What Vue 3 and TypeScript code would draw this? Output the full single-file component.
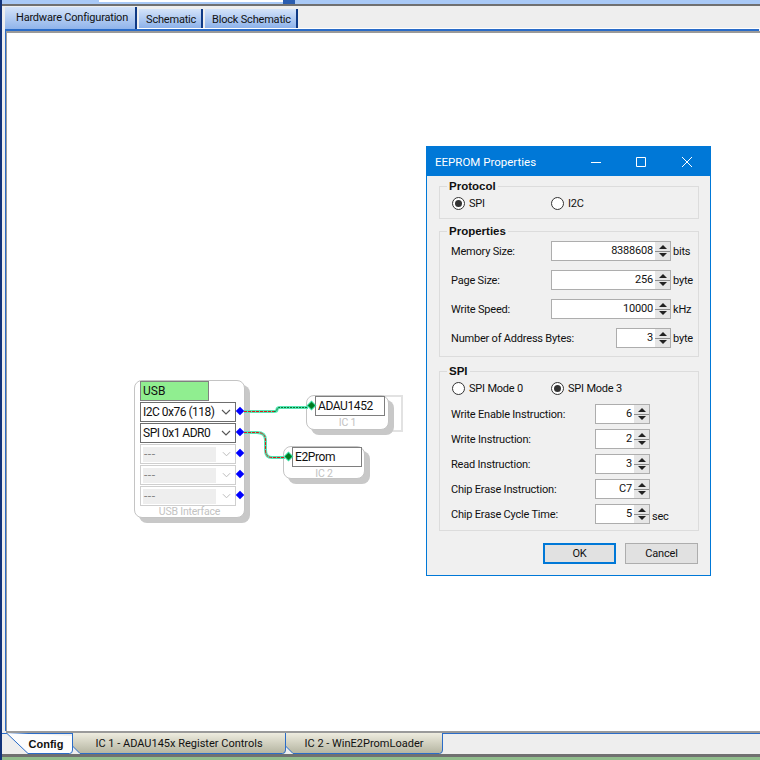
<script setup lang="ts">
interface BottomTab {
  label: string
  width: number
  active?: boolean
}

const topTabs = ['Hardware Configuration', 'Schematic', 'Block Schematic']

const bottomTabs: BottomTab[] = [
  { label: 'Config', width: 67, active: true },
  { label: 'IC 1 - ADAU145x Register Controls', width: 214 },
  { label: 'IC 2 - WinE2PromLoader', width: 158 }
]

const usbPorts = [
  { label: 'I2C 0x76 (118)', on: true },
  { label: 'SPI 0x1 ADR0', on: true },
  { label: '---', on: false },
  { label: '---', on: false },
  { label: '---', on: false }
]

const propertyRows = [
  { label: 'Memory Size:', value: '8388608', unit: 'bits', narrow: false },
  { label: 'Page Size:', value: '256', unit: 'byte', narrow: false },
  { label: 'Write Speed:', value: '10000', unit: 'kHz', narrow: false },
  { label: 'Number of Address Bytes:', value: '3', unit: 'byte', narrow: true }
]

const spiRows = [
  { label: 'Write Enable Instruction:', value: '6', unit: '' },
  { label: 'Write Instruction:', value: '2', unit: '' },
  { label: 'Read Instruction:', value: '3', unit: '' },
  { label: 'Chip Erase Instruction:', value: 'C7', unit: '' },
  { label: 'Chip Erase Cycle Time:', value: '5', unit: 'sec' }
]

// outline of a bottom tab, the slant on the left is bigger for the active one
const tabPath = (t: BottomTab) => {
  const w = t.width - 0.5
  if (t.active) return `M0.5 0 L22 20.5 H${w - 3} Q${w} 20.5 ${w} 17 V3`
  return `M0.5 0 V13 L8 20.5 H${w - 3} Q${w} 20.5 ${w} 17 V0`
}
</script>

<template>
  <div class="app">
    <div class="top-bar">
      <div class="top-input"></div>
      <div class="top-knob"></div>
    </div>

    <div class="tab-strip">
      <div
        v-for="(tab, i) in topTabs"
        :key="tab"
        class="top-tab"
        :class="{ 'is-active': i === 0 }"
      >{{ tab }}</div>
    </div>

    <div class="canvas">
      <div class="node node-usb">
        <div class="usb-title">USB</div>
        <div
          v-for="(port, i) in usbPorts"
          :key="i"
          class="usb-row"
          :class="{ 'is-off': !port.on }"
        >
          <span class="usb-label">{{ port.label }}</span>
          <svg class="chevron" width="10" height="6" viewBox="0 0 10 6">
            <path d="M1 1 L5 5 L9 1" fill="none" stroke-width="1.1" />
          </svg>
          <i class="port-out"></i>
        </div>
        <div class="node-name">USB Interface</div>
      </div>

      <div class="select-frame"></div>
      <div class="node node-ic node-ic1">
        <i class="port-in"></i>
        <div class="ic-input">ADAU1452</div>
        <div class="node-name">IC 1</div>
      </div>

      <div class="node node-ic node-ic2">
        <i class="port-in"></i>
        <div class="ic-input">E2Prom</div>
        <div class="node-name">IC 2</div>
      </div>

      <svg class="wires" width="753" height="698">
        <path class="wire-base" d="M237 378.5 H267 Q270 378.5 270 376.5 Q270 374.5 273 374.5 H301" />
        <path class="wire-red" d="M237 378.5 H267" />
        <path class="wire-green" d="M267 378.5 Q270 378.5 270 376.5 Q270 374.5 273 374.5 H301" />
        <path class="wire-base" d="M237 399.5 H250 Q258.5 399.5 258.5 407 V417 Q258.5 424.5 265 424.5 H278" />
        <path class="wire-red" d="M237 399.5 H250 Q258.5 399.5 258.5 407 V417 Q258.5 424.5 265 424.5 H278" />
      </svg>

      <div class="dialog">
        <div class="title-bar">
          <span class="title-text">EEPROM Properties</span>
          <svg class="win-btn win-min" width="10" height="10" viewBox="0 0 10 10">
            <path d="M0 5.5 H10" />
          </svg>
          <svg class="win-btn" width="10" height="10" viewBox="0 0 10 10">
            <path d="M0.5 0.5 H9.5 V9.5 H0.5 Z" />
          </svg>
          <svg class="win-btn" width="10" height="10" viewBox="0 0 10 10">
            <path d="M0 0 L10 10 M10 0 L0 10" />
          </svg>
        </div>

        <div class="dialog-body">
          <div class="group group-protocol">
            <span class="legend">Protocol</span>
            <div class="radio-row">
              <label class="radio"><i class="dot is-on"></i>SPI</label>
              <label class="radio"><i class="dot"></i>I2C</label>
            </div>
          </div>

          <div class="group group-props">
            <span class="legend">Properties</span>
            <div v-for="row in propertyRows" :key="row.label" class="field-row">
              <span class="field-label">{{ row.label }}</span>
              <div class="spin" :class="{ 'spin-narrow': row.narrow }">
                <span class="spin-value">{{ row.value }}</span>
                <span class="spin-btns">
                  <b class="arrow-up"></b>
                  <b class="arrow-down"></b>
                </span>
              </div>
              <span class="unit">{{ row.unit }}</span>
            </div>
          </div>

          <div class="group group-spi">
            <span class="legend">SPI</span>
            <div class="radio-row">
              <label class="radio"><i class="dot"></i>SPI Mode 0</label>
              <label class="radio"><i class="dot is-on"></i>SPI Mode 3</label>
            </div>
            <div class="spi-fields">
              <div v-for="row in spiRows" :key="row.label" class="spi-row">
                <span class="spi-label">{{ row.label }}</span>
                <div class="spin spin-narrow">
                  <span class="spin-value">{{ row.value }}</span>
                  <span class="spin-btns">
                    <b class="arrow-up"></b>
                    <b class="arrow-down"></b>
                  </span>
                </div>
                <span class="unit unit-low">{{ row.unit }}</span>
              </div>
            </div>
          </div>

          <div class="dialog-footer">
            <button class="btn btn-default">OK</button>
            <button class="btn">Cancel</button>
          </div>
        </div>
      </div>
    </div>

    <div class="bottom-strip">
      <div
        v-for="tab in bottomTabs"
        :key="tab.label"
        class="bottom-tab"
        :class="{ 'is-active': tab.active }"
        :style="{ width: tab.width + 'px' }"
      >
        <svg class="bottom-shape" :width="tab.width" height="21">
          <defs>
            <linearGradient id="tabFill" x1="0" y1="0" x2="0" y2="1">
              <stop offset="0" stop-color="#eeecdf" />
              <stop offset="1" stop-color="#b4b4a0" />
            </linearGradient>
          </defs>
          <path
            :d="tabPath(tab)"
            :fill="tab.active ? '#fdfdfd' : 'url(#tabFill)'"
            stroke="#2a6cc8"
            stroke-width="1"
          />
        </svg>
        <span class="bottom-label">{{ tab.label }}</span>
      </div>
    </div>
    <div class="status-edge"></div>
  </div>
</template>

<style scoped>
.app {
  width: 760px;
  height: 760px;
  display: flex;
  flex-direction: column;
  overflow: hidden;
  background: #eeeeee;
  font-family: Roboto, "Liberation Sans", sans-serif;
  font-size: 11px;
  letter-spacing: -0.2px;
  color: #111;
  box-sizing: border-box;
  border-left: 2px solid #12337a;
}

.top-bar {
  height: 4px;
  flex: none;
  display: flex;
  background: #a9c9f6;
  border-bottom: 2px solid #707070;
  padding-left: 97px;
}

.top-input {
  width: 184px;
  height: 2px;
  background: #fff;
}

.top-knob {
  width: 12px;
  height: 4px;
  background: #2a5db0;
}

.tab-strip {
  height: 23px;
  flex: none;
  display: flex;
  align-items: flex-start;
  gap: 2px;
  margin-left: 3px;
  box-sizing: border-box;
  border-bottom: 1px solid #fff;
}

.top-tab {
  height: 19px;
  margin-top: 3px;
  padding: 0 5px 0 7px;
  line-height: 21px;
  background: linear-gradient(#d4e3f9, #8db2ea);
  border-right: 2px solid #0f3a86;
  white-space: nowrap;
}

.top-tab.is-active {
  height: 23px;
  margin-top: 1px;
  padding: 0 7px 0 11px;
  line-height: 21px;
}

.canvas {
  flex: 1;
  position: relative;
  margin: 2px 0 0 4px;
  background: #fff;
  border-top: 2px solid #9a9a9a;
  border-left: 1px solid #9a9a9a;
  border-bottom: 2px solid #9a9a9a;
  box-shadow: -1px -2px 0 #2a6cc8;
}

.wires {
  position: absolute;
  left: 0;
  top: 0;
  fill: none;
  pointer-events: none;
}

.wire-base {
  stroke: #55e6b4;
  stroke-width: 3;
  fill: none;
}

.wire-red {
  stroke: #e01818;
  stroke-width: 1;
  stroke-dasharray: 3 1;
  fill: none;
}

.wire-green {
  stroke: #0a7a30;
  stroke-width: 1;
  stroke-dasharray: 2 1;
  fill: none;
}

.node {
  position: absolute;
  box-sizing: border-box;
  background: #fff;
  border: 1px solid #c4c4c4;
  border-radius: 8px;
  box-shadow: 5px 5px 0 #c8c8c8;
}

.node-usb {
  left: 127px;
  top: 347px;
  width: 111px;
  height: 138px;
  padding-left: 5px;
}

.usb-title {
  width: 69px;
  height: 20px;
  box-sizing: border-box;
  border: 1px solid #808080;
  background: #90ee90;
  padding-left: 2px;
  line-height: 18px;
  font-size: 12px;
  letter-spacing: 0;
}

.usb-row {
  position: relative;
  width: 96px;
  height: 20px;
  box-sizing: border-box;
  margin-top: 1px;
  border: 1px solid #6e6e6e;
  display: flex;
  align-items: center;
  padding-left: 2px;
  font-size: 12px;
  letter-spacing: -0.5px;
  background: #fff;
}

.usb-label {
  flex: 1;
  white-space: nowrap;
}

.chevron {
  margin-right: 4px;
  stroke: #555;
}

.usb-row.is-off {
  border-color: #cfcfcf;
}

.usb-row.is-off .usb-label {
  flex: none;
  width: 73px;
  height: 15px;
  line-height: 14px;
  margin-right: 6px;
  padding-left: 1px;
  box-sizing: border-box;
  background: #eeeeee;
  color: #888;
  letter-spacing: 0.5px;
}

.usb-row.is-off .chevron {
  stroke: #bbb;
}

.port-out {
  position: absolute;
  right: -8px;
  top: 5px;
  width: 6px;
  height: 6px;
  background: #0000ff;
  transform: rotate(45deg);
}

.port-in {
  position: absolute;
  left: 2px;
  top: 7px;
  width: 5px;
  height: 5px;
  background: #007a20;
  transform: rotate(45deg);
  box-shadow: 0 0 0 1px #35dca0;
}

.node-name {
  text-align: center;
  color: #c2c2c2;
  font-size: 10.5px;
  line-height: 14px;
}

.node-usb .node-name {
  margin: 0 0 0 -5px;
  line-height: 12px;
}

.node-ic {
  width: 83px;
  height: 35px;
  padding-left: 8px;
}

.node-ic1 {
  left: 299px;
  top: 362px;
}

.node-ic2 {
  left: 276px;
  top: 413px;
  width: 82px;
  height: 33px;
}

.select-frame {
  position: absolute;
  left: 309px;
  top: 362px;
  width: 83px;
  height: 33px;
  border: 2px solid #e2e2e2;
}

.ic-input {
  width: 70px;
  height: 20px;
  box-sizing: border-box;
  border: 1px solid #7e7e7e;
  background: #fff;
  padding-left: 2px;
  line-height: 18px;
  font-size: 12px;
  letter-spacing: -0.4px;
}

.node-ic .node-name {
  margin-left: -8px;
}

.dialog {
  position: absolute;
  left: 419px;
  top: 113px;
  width: 285px;
  height: 430px;
  box-sizing: border-box;
  border: 1px solid #0078d7;
  background: #f0f0f0;
  display: flex;
  flex-direction: column;
}

.title-bar {
  flex: none;
  height: 29px;
  background: #0078d7;
  display: flex;
  align-items: center;
  color: #fff;
  padding-left: 8px;
}

.title-text {
  flex: 1;
  font-size: 11.5px;
  letter-spacing: 0;
}

.win-btn {
  margin-right: 36px;
  fill: none;
  stroke: #fff;
  stroke-width: 1;
}

.win-min {
  margin-right: 35px;
}

.win-btn:last-child {
  margin-right: 18px;
}

.dialog-body {
  flex: 1;
  display: flex;
  flex-direction: column;
  padding: 10px 11px 0 12px;
}

.group {
  position: relative;
  box-sizing: border-box;
  border: 1px solid #dcdcdc;
  padding-left: 12px;
}

.legend {
  position: absolute;
  left: 7px;
  top: -7px;
  padding: 0 2px;
  background: #f0f0f0;
  font-family: "Liberation Sans", Arial, sans-serif;
  font-weight: bold;
  line-height: 13px;
  font-size: 11.5px;
  letter-spacing: 0;
}

.group-protocol {
  height: 33px;
}

.group-props {
  height: 126px;
  margin-top: 12px;
  padding-top: 9px;
}

.group-spi {
  height: 160px;
  margin-top: 14px;
}

.radio-row {
  display: grid;
  grid-template-columns: 99px 99px;
  height: 13px;
  margin-top: 10px;
}

.radio {
  display: flex;
  align-items: center;
  gap: 4px;
  line-height: 13px;
}

.dot {
  width: 13px;
  height: 13px;
  box-sizing: border-box;
  border: 1px solid #333;
  border-radius: 50%;
  background: #fff;
  display: flex;
  align-items: center;
  justify-content: center;
}

.dot.is-on::after {
  content: "";
  width: 7px;
  height: 7px;
  border-radius: 50%;
  background: #333;
}

.field-row {
  display: flex;
  align-items: center;
  height: 20px;
  margin: 0 0 9px -1px;
}

.field-label {
  flex: 1;
  white-space: nowrap;
  padding-top: 1px;
}

.spin {
  width: 120px;
  height: 20px;
  box-sizing: border-box;
  border: 1px solid #adadad;
  background: #fff;
  display: flex;
  align-items: center;
  justify-content: flex-end;
}

.spin-narrow {
  width: 55px;
}

.spin-value {
  flex: 1;
  text-align: right;
  padding: 0 2px 1px 0;
}

.spin-btns {
  width: 15px;
  height: 18px;
  background: #e6e6e6;
  display: flex;
  flex-direction: column;
  align-items: center;
  justify-content: space-around;
  padding: 1px 0;
  box-sizing: border-box;
  background-image: linear-gradient(#8c8c8c, #8c8c8c);
  background-repeat: no-repeat;
  background-size: 100% 1px;
  background-position: 0 50%;
}

.arrow-up,
.arrow-down {
  width: 0;
  height: 0;
  border-left: 4px solid transparent;
  border-right: 4px solid transparent;
}

.arrow-up {
  border-bottom: 4px solid #222;
}

.arrow-down {
  border-top: 4px solid #222;
}

.unit {
  width: 27px;
  padding-left: 2px;
  box-sizing: border-box;
  white-space: nowrap;
}

.spi-fields {
  display: flex;
  flex-direction: column;
  gap: 5px;
  margin: 9px 0 0 -1px;
}

.spi-row {
  display: flex;
  align-items: center;
  height: 20px;
}

.spi-label {
  width: 144px;
  white-space: nowrap;
}

.unit-low {
  padding: 4px 0 0 2px;
}

.dialog-footer {
  display: flex;
  justify-content: flex-end;
  gap: 9px;
  margin-top: 12px;
  padding-right: 1px;
}

.btn {
  width: 73px;
  height: 21px;
  box-sizing: border-box;
  padding: 0 0 1px;
  border: 1px solid #adadad;
  background: #e1e1e1;
  font: inherit;
  letter-spacing: inherit;
  color: #111;
}

.btn-default {
  border: 2px solid #0078d7;
}

.bottom-strip {
  flex: none;
  height: 21px;
  display: flex;
  padding-left: 4px;
  box-sizing: border-box;
  border-top: 1px solid #2a6cc8;
}

.bottom-tab {
  position: relative;
  height: 21px;
  margin-top: -1px;
  display: flex;
  align-items: center;
  justify-content: center;
  margin-right: -1px;
  letter-spacing: 0;
}

.bottom-shape {
  position: absolute;
  left: 0;
  top: 0;
}

.bottom-label {
  position: relative;
  white-space: nowrap;
}

.bottom-tab.is-active .bottom-label {
  font-family: "Liberation Sans", Arial, sans-serif;
  font-weight: bold;
  padding-left: 13px;
}

.status-edge {
  flex: none;
  height: 3px;
  background: #90bc8c;
  border-top: 3px solid #707070;
}
</style>

<style>
body {
  background: #eeeeee;
}
</style>
